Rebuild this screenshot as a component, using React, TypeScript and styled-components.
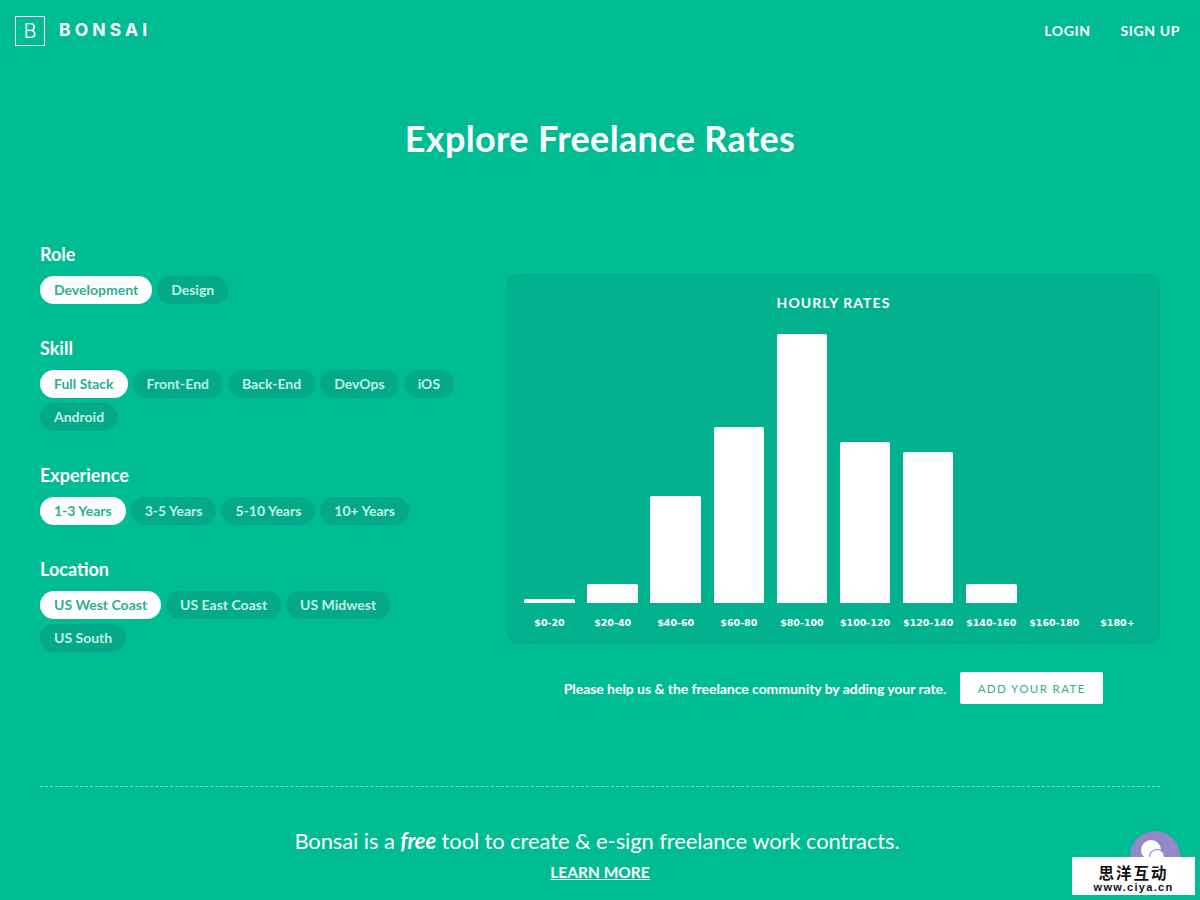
import React from "react";
import styled, { createGlobalStyle } from "styled-components";

const GlobalStyle = createGlobalStyle`
  html, body {
    margin: 0;
    padding: 0;
    background: #00bc93;
    font-family: "Lato", "Liberation Sans", sans-serif;
    color: #fff;
  }
  * { box-sizing: border-box; }
`;

const filters = [
  { title: "Role", options: ["Development", "Design"] },
  { title: "Skill", options: ["Full Stack", "Front-End", "Back-End", "DevOps", "iOS", "Android"] },
  { title: "Experience", options: ["1-3 Years", "3-5 Years", "5-10 Years", "10+ Years"] },
  { title: "Location", options: ["US West Coast", "US East Coast", "US Midwest", "US South"] },
];

const rates = [
  { label: "$0-20", height: 4 },
  { label: "$20-40", height: 19 },
  { label: "$40-60", height: 107 },
  { label: "$60-80", height: 176 },
  { label: "$80-100", height: 269 },
  { label: "$100-120", height: 161 },
  { label: "$120-140", height: 151 },
  { label: "$140-160", height: 19 },
  { label: "$160-180", height: 0 },
  { label: "$180+", height: 0 },
];

const Page = styled.div`
  position: relative;
  width: 1200px;
  height: 900px;
  overflow: hidden;
  background: #00bc93;
`;

const Header = styled.header`
  display: flex;
  justify-content: space-between;
  align-items: center;
  height: 62px;
  padding: 0 20px 0 15px;
`;

const Brand = styled.div`
  display: flex;
  align-items: center;
  gap: 14px;
`;

const LogoBox = styled.div`
  display: flex;
  align-items: center;
  justify-content: center;
  width: 30px;
  height: 30px;
  border: 1px solid #fff;
  font-family: "Inter", sans-serif;
  font-size: 20px;
  font-weight: 300;
`;

const BrandName = styled.span`
  padding-bottom: 3px;
  font-family: "Inter", sans-serif;
  font-size: 17.5px;
  font-weight: 700;
  letter-spacing: 4.1px;
`;

const Nav = styled.nav`
  display: flex;
  gap: 30px;
  padding-bottom: 2px;
`;

const NavLink = styled.a`
  font-size: 14px;
  font-weight: 700;
  letter-spacing: 0.6px;
`;

const Title = styled.h1`
  margin: 52px 0 0;
  height: 48px;
  line-height: 48px;
  font-size: 36px;
  font-weight: 700;
  letter-spacing: 0.35px;
  text-align: center;
`;

const Main = styled.main`
  display: flex;
  justify-content: space-between;
  padding: 0 40px;
  margin-top: 81px;
`;

const Filters = styled.section`
  width: 430px;
`;

const FilterGroup = styled.div`
  margin-bottom: 33px;
`;

const FilterTitle = styled.h3`
  margin: 0 0 11px;
  height: 22px;
  line-height: 22px;
  font-size: 18px;
  font-weight: 700;
`;

const PillRow = styled.div`
  display: flex;
  flex-wrap: wrap;
  gap: 5px;
`;

const Pill = styled.span<{ $active?: boolean }>`
  display: inline-flex;
  align-items: center;
  height: 28px;
  padding: 0 14px 1px;
  border-radius: 14px;
  font-size: 14px;
  font-weight: 700;
  background: ${(p) => (p.$active ? "#fff" : "#04aa87")};
  color: ${(p) => (p.$active ? "#2bb08e" : "#c0f0e3")};
`;

const RightColumn = styled.section`
  width: 653px;
  padding-top: 31px;
`;

const ChartPanel = styled.div`
  height: 370px;
  padding: 0 16.3px;
  border: 1px solid #02ab88;
  border-radius: 12px;
  background: #02b18d;
`;

const ChartTitle = styled.h4`
  margin: 19px 0 0;
  height: 18px;
  line-height: 18px;
  font-size: 14px;
  font-weight: 700;
  letter-spacing: 1.05px;
  text-align: center;
`;

const Bars = styled.div`
  display: grid;
  grid-template-columns: repeat(10, 1fr);
  column-gap: 12.6px;
  align-items: end;
  height: 269px;
  margin-top: 22px;
`;

const Bar = styled.div<{ $height: number }>`
  height: ${(p) => p.$height}px;
  background: #fff;
  border-radius: 2px 2px 0 0;
`;

const Labels = styled.div`
  display: grid;
  grid-template-columns: repeat(10, 1fr);
  column-gap: 12.6px;
  margin-top: 14px;
`;

const BarLabel = styled.span`
  font-family: "DejaVu Sans", sans-serif;
  font-size: 9.5px;
  font-weight: 700;
  line-height: 12px;
  text-align: center;
  white-space: nowrap;
`;

const Cta = styled.div`
  display: flex;
  justify-content: center;
  align-items: center;
  gap: 14px;
  margin-top: 28px;
`;

const CtaText = styled.span`
  font-size: 14px;
  font-weight: 700;
  letter-spacing: -0.05px;
`;

const CtaButton = styled.button`
  width: 143px;
  height: 32px;
  border: 0;
  border-radius: 2px;
  background: #fff;
  color: #2bb08e;
  font-family: inherit;
  font-size: 11.5px;
  font-weight: 400;
  letter-spacing: 1.4px;
`;

const Divider = styled.hr`
  margin: 82px 40px 0;
  border: 0;
  border-top: 1px dashed #6fe0c6;
`;

const Footer = styled.footer`
  margin-top: 39px;
  text-align: center;
`;

const FooterLine = styled.p`
  margin: 0;
  height: 30px;
  padding-right: 6px;
  line-height: 30px;
  font-size: 22px;
  font-weight: 400;
  letter-spacing: -0.11px;
`;

const LearnMore = styled.a`
  display: inline-block;
  margin-top: 7px;
  font-size: 15.5px;
  font-weight: 700;
  text-decoration: underline;
`;

const ChatBubble = styled.div`
  position: absolute;
  right: 20px;
  bottom: 19px;
  width: 50px;
  height: 50px;
  border-radius: 50%;
  background: #9388c8;
`;

const ChatDot = styled.div<{ $x: number; $y: number; $size: number }>`
  position: absolute;
  left: ${(p) => p.$x}px;
  top: ${(p) => p.$y}px;
  width: ${(p) => p.$size}px;
  height: ${(p) => p.$size}px;
  border-radius: 50%;
  background: #fff;
  box-shadow: 0 0 0 1px #9388c8;
`;

const Watermark = styled.div`
  position: absolute;
  left: 1072px;
  top: 857px;
  width: 123px;
  height: 38px;
  background: #fff;
  color: #111;
  text-align: center;
`;

const WatermarkCn = styled.div`
  font-family: "Noto Sans CJK SC", sans-serif;
  font-size: 15.5px;
  font-weight: 700;
  line-height: 20px;
  margin-top: 5px;
  letter-spacing: 2px;
`;

const WatermarkUrl = styled.div`
  font-family: "Liberation Sans", sans-serif;
  font-size: 11px;
  font-weight: 700;
  line-height: 11px;
  letter-spacing: 1.3px;
`;

export default function App() {
  return (
    <>
      <GlobalStyle />
      <Page>
        <Header>
          <Brand>
            <LogoBox>B</LogoBox>
            <BrandName>BONSAI</BrandName>
          </Brand>
          <Nav>
            <NavLink>LOGIN</NavLink>
            <NavLink>SIGN UP</NavLink>
          </Nav>
        </Header>
        <Title>Explore Freelance Rates</Title>
        <Main>
          <Filters>
            {filters.map((group) => (
              <FilterGroup key={group.title}>
                <FilterTitle>{group.title}</FilterTitle>
                <PillRow>
                  {group.options.map((option, i) => (
                    <Pill key={option} $active={i === 0}>
                      {option}
                    </Pill>
                  ))}
                </PillRow>
              </FilterGroup>
            ))}
          </Filters>
          <RightColumn>
            <ChartPanel>
              <ChartTitle>HOURLY RATES</ChartTitle>
              <Bars>
                {rates.map((r) => (
                  <Bar key={r.label} $height={r.height} />
                ))}
              </Bars>
              <Labels>
                {rates.map((r) => (
                  <BarLabel key={r.label}>{r.label}</BarLabel>
                ))}
              </Labels>
            </ChartPanel>
            <Cta>
              <CtaText>Please help us &amp; the freelance community by adding your rate.</CtaText>
              <CtaButton>ADD YOUR RATE</CtaButton>
            </Cta>
          </RightColumn>
        </Main>
        <Divider />
        <Footer>
          <FooterLine>
            Bonsai is a <b><i>free</i></b> tool to create &amp; e-sign freelance work contracts.
          </FooterLine>
          <LearnMore>LEARN MORE</LearnMore>
        </Footer>
        <ChatBubble>
          <ChatDot $x={11} $y={9} $size={20} />
          <ChatDot $x={20} $y={19} $size={14} />
        </ChatBubble>
        <Watermark>
          <WatermarkCn>思洋互动</WatermarkCn>
          <WatermarkUrl>www.ciya.cn</WatermarkUrl>
        </Watermark>
      </Page>
    </>
  );
}
